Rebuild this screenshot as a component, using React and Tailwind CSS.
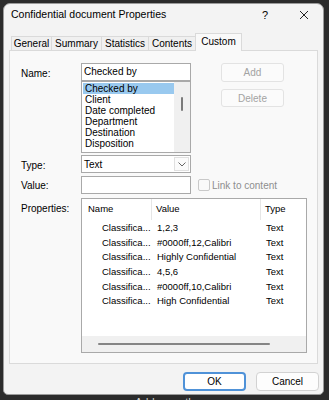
const names = ["Checked by", "Client", "Date completed", "Department", "Destination", "Disposition"];

const props = [
  ["Classifica...", "1,2,3", "Text"],
  ["Classifica...", "#0000ff,12,Calibri", "Text"],
  ["Classifica...", "Highly Confidential", "Text"],
  ["Classifica...", "4,5,6", "Text"],
  ["Classifica...", "#0000ff,10,Calibri", "Text"],
  ["Classifica...", "High Confidential", "Text"],
];

const tabs = [
  ["General", "w-[40px]"],
  ["Summary", "w-[50px]"],
  ["Statistics", "w-[47px]"],
  ["Contents", "w-[47px]"],
];

export default function App() {
  return (
    <div className="w-[329px] h-[400px] overflow-hidden bg-[#2b2b2b] pl-[3px] pt-[3px] font-['Liberation_Sans',Arial,sans-serif] text-[10px] text-black">
      <div className="w-[321px] h-[392px] rounded-t-[7px] rounded-b-[5px] border border-[#9a9a9a] bg-[#f3f3f3] flex flex-col">
        {/* title bar */}
        <div className="h-[22px] flex items-center pl-[7px] pr-[14px]">
          <span className="flex-1 text-[10.5px]">Confidential document Properties</span>
          <span className="text-[11px] mr-[31px]">?</span>
          <svg width="10" height="10" viewBox="0 0 10 10" className="text-[#222]">
            <path d="M1 1L9 9M9 1L1 9" stroke="currentColor" strokeWidth="1" />
          </svg>
        </div>

        {/* tabs */}
        <div className="mt-[7px] h-[17px] flex items-end pl-[7px] relative z-10">
          {tabs.map(([t, w]) => (
            <div
              key={t}
              className={`${w} h-[14px] border-t border-l border-[#dadada] bg-[#f0f0f0] flex items-center justify-center`}
            >
              {t}
            </div>
          ))}
          <div className="w-[47px] h-[18px] -mb-px border border-b-0 border-[#dadada] bg-[#f9f9f9] flex items-center justify-center pb-[2px]">
            Custom
          </div>
        </div>

        {/* panel */}
        <div className="mx-[5px] h-[314px] border border-[#dadada] bg-[#f9f9f9] pl-[11px] pt-[12px]">
          {/* name row */}
          <div className="flex">
            <div className="w-[60px] pt-[3px]">Name:</div>
            <div className="w-[110px] flex flex-col">
              <div className="h-[18px] border border-[#a9a9a9] bg-white px-[2px] leading-[16px]">Checked by</div>
              <div className="h-[72px] border border-[#a9a9a9] bg-white flex">
                <div className="flex-1 pt-[1px] pl-[1px]">
                  {names.map((n, i) => (
                    <div key={n} className={`h-[11px] leading-[11px] px-[2px] ${i === 0 ? "bg-[#99c9ef]" : ""}`}>
                      {n}
                    </div>
                  ))}
                </div>
                <div className="w-[16px] bg-[#f0f0f0] pt-[15px] flex justify-center">
                  <div className="w-[2px] h-[14px] rounded-full bg-[#7a7a7a]" />
                </div>
              </div>
            </div>
            <div className="ml-[30px] w-[63px] flex flex-col gap-[7px] text-[#a3a3a3]">
              <div className="h-[19px] rounded-[3px] border border-[#e3e3e3] bg-[#fbfbfb] flex items-center justify-center">Add</div>
              <div className="h-[18px] rounded-[3px] border border-[#e3e3e3] bg-[#fbfbfb] flex items-center justify-center">Delete</div>
            </div>
          </div>

          {/* type row */}
          <div className="flex mt-[2px]">
            <div className="w-[60px] pt-[3px]">Type:</div>
            <div className="w-[110px] h-[18px] border border-[#a9a9a9] bg-white flex items-center pl-[2px] pr-[1px]">
              <span className="flex-1">Text</span>
              <div className="w-[15px] h-[14px] border border-[#e0e0e0] bg-[#fbfbfb] flex items-center justify-center">
                <svg width="8" height="5" viewBox="0 0 8 5">
                  <path d="M0.5 0.5L4 4L7.5 0.5" fill="none" stroke="#555" strokeWidth="0.9" />
                </svg>
              </div>
            </div>
          </div>

          {/* value row */}
          <div className="flex mt-[3px] items-center">
            <div className="w-[60px]">Value:</div>
            <div className="w-[110px] h-[18px] border border-[#a9a9a9] bg-white" />
            <div className="ml-[7px] w-[12px] h-[12px] rounded-[2px] border border-[#c9c9c9] bg-[#f9f9f9]" />
            <span className="ml-[2px] text-[#8e8e8e]">Link to content</span>
          </div>

          {/* properties */}
          <div className="flex mt-[4px]">
            <div className="w-[60px] pt-[3px]">Properties:</div>
            <div className="w-[226px] h-[155px] border border-[#a9a9a9] bg-white flex flex-col text-[9.5px]">
              <div className="h-[21px] flex items-center">
                <div className="w-[70px] h-full border-r border-[#e6e6e6] pl-[6px] flex items-center">Name</div>
                <div className="w-[109px] h-full border-r border-[#e6e6e6] pl-[4px] flex items-center">Value</div>
                <div className="flex-1 pl-[4px]">Type</div>
              </div>
              <div className="flex-1 pt-[1px]">
                {props.map(([n, v, t], i) => (
                  <div key={i} className="h-[14.6px] flex items-center">
                    <div className="w-[70px] pl-[20px]">{n}</div>
                    <div className="w-[109px] pl-[5px]">{v}</div>
                    <div className="flex-1 pl-[5px]">{t}</div>
                  </div>
                ))}
              </div>
              <div className="h-[16px] bg-[#f0f0f0] flex items-center pl-[16px]">
                <div className="w-[172px] h-[2px] rounded-full bg-[#858585]" />
              </div>
            </div>
          </div>
        </div>

        {/* footer */}
        <div className="flex justify-end gap-[10px] pr-[4px] pt-[8px]">
          <div className="w-[63px] h-[19px] rounded-[4px] border-2 border-[#4f92d8] bg-white flex items-center justify-center">OK</div>
          <div className="w-[63px] h-[19px] rounded-[4px] border border-[#d2d2d2] bg-[#fdfdfd] flex items-center justify-center">Cancel</div>
        </div>
      </div>
      <div className="pl-[132px] text-[11px] text-[#cfcfcf] leading-[12px] mt-[1px]">Add an author</div>
    </div>
  );
}
